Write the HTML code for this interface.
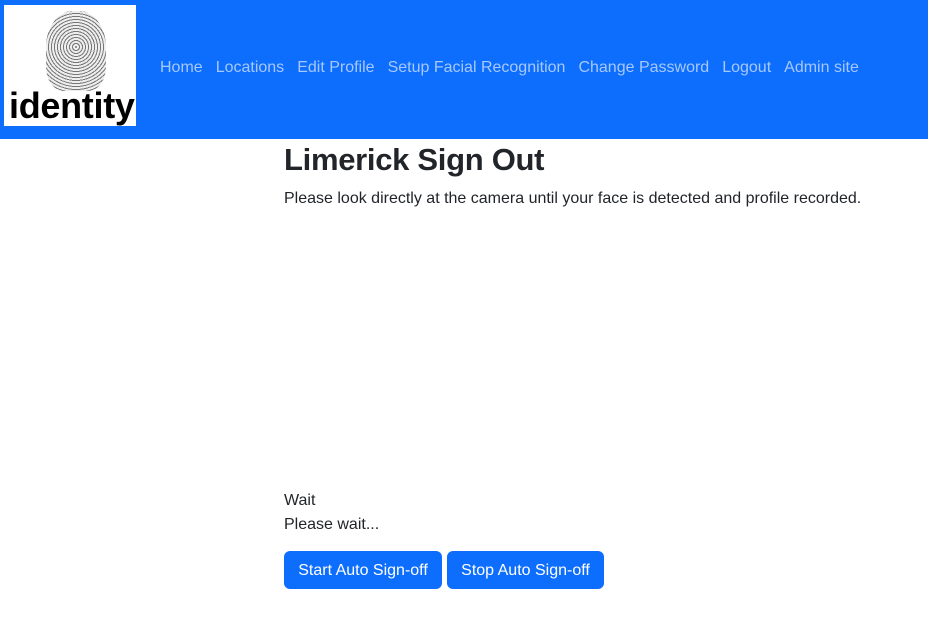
<!DOCTYPE html>
<html><head><meta charset="utf-8"><style>
body{margin:0;width:928px;height:635px;background:#fff;font-family:"Liberation Sans",sans-serif;color:#212529;position:relative;overflow:hidden}
.nav{position:absolute;left:0;top:0;width:928px;height:139px;background:#0d6efd}
.logo{position:absolute;left:4px;top:5px;width:132px;height:121px;background:#fff;overflow:hidden}
.head{position:absolute;left:42px;top:6px;width:60px;height:80px;border-radius:45% 45% 30% 30%;background:repeating-radial-gradient(circle at 50% 45%,#777 0 1px,#eee 1px 3px)}
.logo .t{position:absolute;left:5px;top:80px;font-weight:bold;font-size:36px;color:#000;letter-spacing:-0.3px}
.links{position:absolute;top:59px;left:160px;font-size:16px;color:#a6c8ff;white-space:nowrap}
.links span{margin-right:13px}
.a{position:absolute;left:284px;white-space:nowrap;font-size:16px}
h1{position:absolute;left:284px;top:142px;margin:0;font-size:31px;font-weight:600;letter-spacing:-0.3px}
.btn{position:absolute;top:551px;height:38px;background:#0d6efd;color:#fff;border-radius:6px;font-size:16px;line-height:40px;text-align:center}
</style></head><body>
<div class="nav"><div class="logo"><div class="head"></div><div class="t">identity</div></div>
<div class="links"><span>Home</span><span>Locations</span><span>Edit Profile</span><span>Setup Facial Recognition</span><span>Change Password</span><span>Logout</span><span>Admin site</span></div></div>
<h1>Limerick Sign Out</h1>
<div class="a" style="top:190px">Please look directly at the camera until your face is detected and profile recorded.</div>
<div class="a" style="top:492px">Wait</div>
<div class="a" style="top:516px">Please wait...</div>
<div class="btn" style="left:284px;width:158px">Start Auto Sign-off</div>
<div class="btn" style="left:447px;width:157px">Stop Auto Sign-off</div>
</body></html>
